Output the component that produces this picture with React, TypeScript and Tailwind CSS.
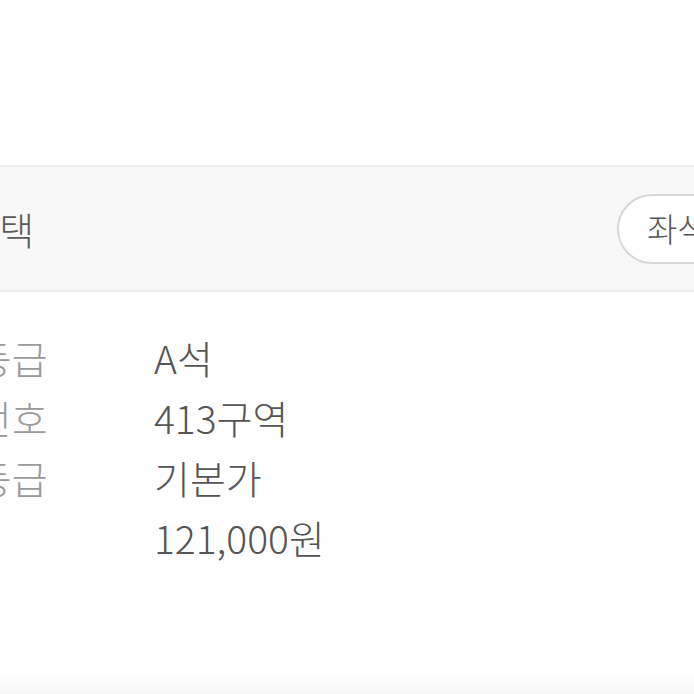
const rows = [
  { label: '좌석등급', value: 'A석' },
  { label: '좌석번호', value: '413구역' },
  { label: '가격등급', value: '기본가' },
  { label: '가격', value: '121,000원' },
];

export default function App() {
  return (
    <div className="w-full h-[694px] overflow-hidden bg-white font-['Noto_Sans_CJK_KR',sans-serif] font-light">
      <div className="h-[165px]" />

      {/* Section header */}
      <div className="-ml-[114px] h-[127px] flex items-center bg-[#f8f8f8] border-y-2 border-[#ededed]">
        <span className="text-[38px] text-[#5a5a5a] whitespace-nowrap">좌석 선택</span>
        <div className="flex-1" />
        <button className="-mr-[126px] w-[203px] h-[70px] pl-[28px] text-left rounded-full border-2 border-[#d6d6d6] bg-white text-[33px] text-[#555] leading-none whitespace-nowrap">
          좌석도 보기
        </button>
      </div>

      {/* Seat info */}
      <div className="-ml-[96px] pt-[35px] flex flex-col">
        {rows.map((r) => (
          <div key={r.label} className="flex items-center h-[60px] text-[39px] whitespace-nowrap">
            <span className="w-[250px] text-[#9a9a9a]">{r.label}</span>
            <span className="text-[#555]">{r.value}</span>
          </div>
        ))}
      </div>

      <div className="mt-[110px] h-[20px] bg-gradient-to-b from-[#fdfdfd] to-[#f6f6f6]" />
    </div>
  );
}
